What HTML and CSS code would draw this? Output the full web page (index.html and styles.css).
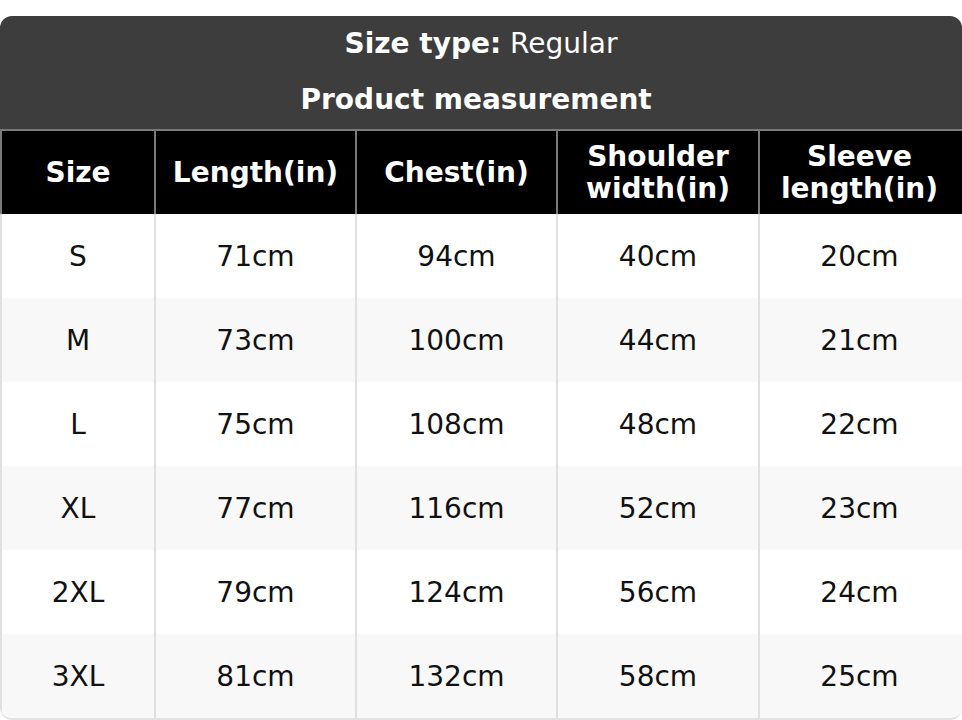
FILE: index.html
```html
<!DOCTYPE html>
<html>
<head>
<meta charset="utf-8">
<link rel="stylesheet" href="styles.css">
</head>
<body>
<div class="card">
  <div class="title">
    <div class="title-line"><b>Size type:</b> Regular</div>
    <div class="title-line"><b>Product measurement&nbsp;</b></div>
  </div>
  <table class="chart">
    <colgroup>
      <col class="c1"><col class="c2"><col class="c3"><col class="c4"><col class="c5">
    </colgroup>
    <thead>
      <tr><th>Size</th><th>Length(in)</th><th>Chest(in)</th><th>Shoulder<br>width(in)</th><th>Sleeve<br>length(in)</th></tr>
    </thead>
    <tbody>
      <tr><td>S</td><td>71cm</td><td>94cm</td><td>40cm</td><td>20cm</td></tr>
      <tr><td>M</td><td>73cm</td><td>100cm</td><td>44cm</td><td>21cm</td></tr>
      <tr><td>L</td><td>75cm</td><td>108cm</td><td>48cm</td><td>22cm</td></tr>
      <tr><td>XL</td><td>77cm</td><td>116cm</td><td>52cm</td><td>23cm</td></tr>
      <tr><td>2XL</td><td>79cm</td><td>124cm</td><td>56cm</td><td>24cm</td></tr>
      <tr><td>3XL</td><td>81cm</td><td>132cm</td><td>58cm</td><td>25cm</td></tr>
    </tbody>
  </table>
</div>
</body>
</html>
```
FILE: styles.css
```css
html, body {
  margin: 0;
  padding: 0;
  background: #fff;
}
body {
  padding-top: 16px;
  font-family: "DejaVu Sans", "Liberation Sans", sans-serif;
  color: #111;
}
.card {
  width: 962px;
  border-radius: 12px;
  overflow: hidden;
  border-bottom: 2px solid #e2e2e2;
  box-sizing: border-box;
}
.title {
  background: #3d3d3d;
  color: #fff;
  height: 113px;
  display: flex;
  flex-direction: column;
  align-items: center;
  font-size: 28px;
}
.title-line {
  height: 56px;
  line-height: 56px;
}
.title-line:first-child { line-height: 55px; }
.chart {
  width: 962px;
  border-collapse: collapse;
  table-layout: fixed;
}
.c1 { width: 154px; }
.c2 { width: 201px; }
.c3 { width: 201px; }
.c4 { width: 202px; }
.c5 { width: 204px; }
.chart th {
  background: #000;
  color: #fff;
  font-weight: bold;
  font-size: 28px;
  line-height: 32px;
  height: 83px;
  padding: 0;
  border-top: 2px solid #7a7a7a;
  border-left: 2px solid #7a7a7a;
}
.chart th:last-child { border-right: 2px solid #7a7a7a; }
.chart td {
  text-align: center;
  font-size: 28px;
  height: 84px;
  padding: 0;
  border-left: 2px solid #e0e0e0;
}
.chart td:last-child { border-right: 2px solid #e0e0e0; padding-right: 3px; }
.chart th:last-child { padding-right: 3px; }
.chart tbody tr:nth-child(even) td { background: #f8f8f8; }
```
